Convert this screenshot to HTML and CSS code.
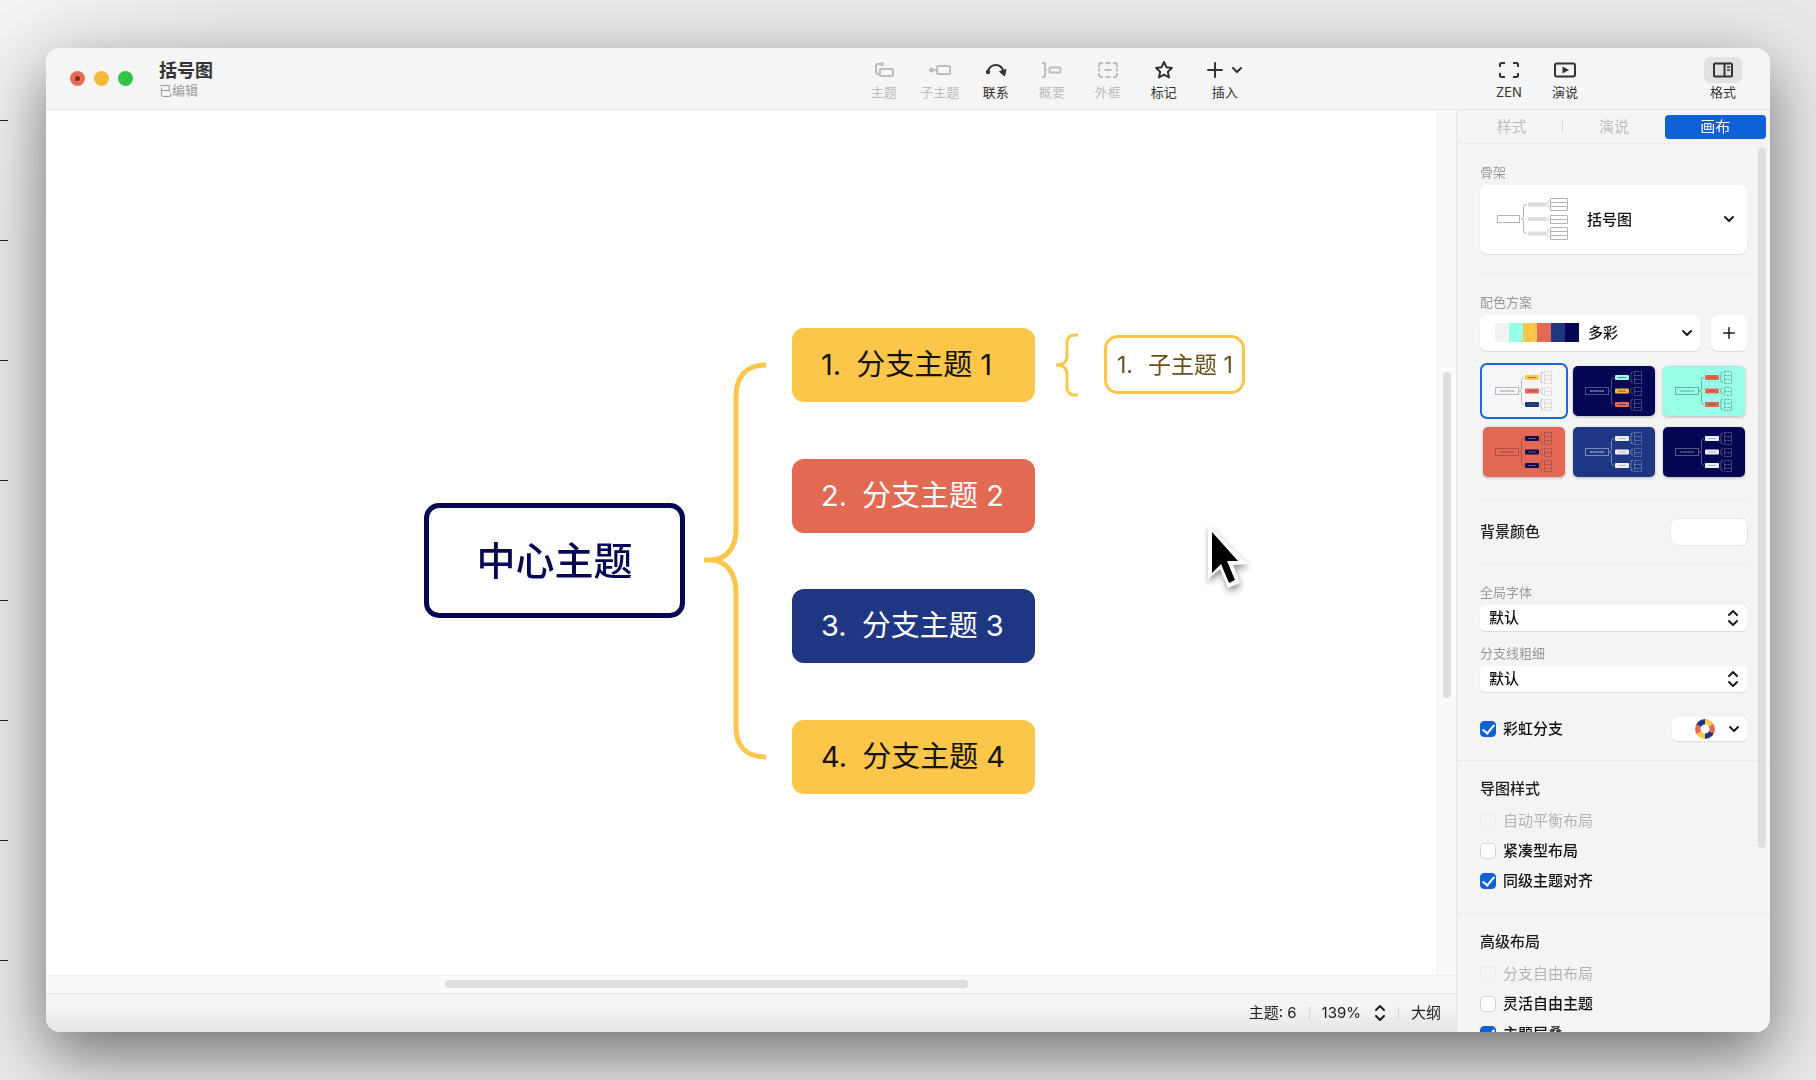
FILE: index.html
```html
<!DOCTYPE html>
<html lang="zh-CN">
<head>
<meta charset="utf-8">
<meta name="viewport" content="width=device-width, initial-scale=1">
<title>括号图</title>
<link rel="stylesheet" href="styles.css">
</head>
<body>
<svg class="defs" aria-hidden="true">
  <symbol id="chevron" viewBox="0 0 12 12"><path d="M2 4l4 4 4-4" fill="none" stroke="currentColor" stroke-width="2" stroke-linecap="round" stroke-linejoin="round"/></symbol>
  <symbol id="updown" viewBox="0 0 12 18"><path d="M2 6l4-4 4 4M2 12l4 4 4-4" fill="none" stroke="currentColor" stroke-width="2" stroke-linecap="round" stroke-linejoin="round"/></symbol>
  <symbol id="plus" viewBox="0 0 16 16"><path d="M8 1v14M1 8h14" fill="none" stroke="currentColor" stroke-width="2" stroke-linecap="round"/></symbol>
  <symbol id="minimap" viewBox="0 0 82 50">
    <rect x="12.500" y="21.500" width="23" height="7" class="m-line"/>
    <path d="M17 25h14" stroke="currentColor" stroke-width="1.200" stroke-dasharray="2 .4"/>
    <path d="M41 11.500q-2.500 0-2.500 3v8q0 2.500-2 2.500q2 0 2 2.500v8q0 3 2.500 3M60 6q-2 0-2 2v2q0 1-1 1.500q1 .5 1 1.500v2q0 2 2 2M60 22q-2 0-2 1.500t-1 1.500q1 0 1 1.500t2 1.500M60 33q-2 0-2 2v2q0 1-1 1.500q1 .5 1 1.500v2q0 2 2 2" class="m-line"/>
    <rect x="42" y="9" width="14" height="5" rx="1" class="m-a"/>
    <rect x="42" y="22.500" width="14" height="5" rx="1" class="m-b"/>
    <rect x="42" y="36" width="14" height="5" rx="1" class="m-c"/>
    <path d="M45 11.500h8M45 25h8M45 38.500h8" class="m-label"/>
    <path d="M61.500 5.500h7v12h-7zM61.500 9.500h7M61.500 13.500h7M61.500 21.500h7v8h-7zM61.500 25.500h7M61.500 33.500h7v11h-7zM61.500 37.500h7M61.500 41.500h7" class="m-leaf"/>
  </symbol>
</svg>

<main class="window">
  <header class="titlebar">
    <div class="brand">
      <div class="lights">
        <button class="light light-close" aria-label="关闭"></button>
        <button class="light light-min" aria-label="最小化"></button>
        <button class="light light-max" aria-label="缩放"></button>
      </div>
      <div class="doc">
        <h1 class="doc-name">括号图</h1>
        <p class="doc-state">已编辑</p>
      </div>
    </div>
    <nav class="tools" aria-label="工具">
      <button class="tool" disabled><span class="tool-icon"><svg width="20" height="18" viewBox="0 0 20 18"><g fill="none" stroke="currentColor" stroke-width="2"><rect x="6" y="8" width="13" height="7" rx="1.500"/><path d="M7 3H4Q2 3 2 5v6.500Q2 13 4 13h1.500"/></g><circle cx="8" cy="3" r="2" fill="currentColor"/></svg></span>主题</button>
      <button class="tool" disabled><span class="tool-icon"><svg width="24" height="18" viewBox="0 0 24 18"><rect x="9" y="5" width="13" height="8" rx="1.500" fill="none" stroke="currentColor" stroke-width="2"/><path d="M3 9h6" stroke="currentColor" stroke-width="2"/><circle cx="3.500" cy="9" r="2.500" fill="currentColor"/></svg></span>子主题</button>
      <button class="tool"><span class="tool-icon"><svg width="22" height="18" viewBox="0 0 22 18"><path d="M3 10Q5 4 11 4q5.500 0 7.500 6.500" fill="none" stroke="currentColor" stroke-width="2"/><circle cx="3" cy="11" r="2.200" fill="currentColor"/><path d="M14.500 10.500l6.500-2-1.500 6.500z" fill="currentColor" stroke="currentColor" stroke-linejoin="round"/></svg></span>联系</button>
      <button class="tool" disabled><span class="tool-icon"><svg width="22" height="18" viewBox="0 0 22 18"><g fill="none" stroke="currentColor" stroke-width="2"><path d="M1 2h1.500q1.500 0 1.500 1.500v11Q4 16 2.500 16H1M4 9h2"/><rect x="8.500" y="6.500" width="11" height="5" rx="1"/></g></svg></span>概要</button>
      <button class="tool" disabled><span class="tool-icon"><svg width="20" height="18" viewBox="0 0 20 18"><g fill="none" stroke="currentColor" stroke-width="2"><path d="M1 6V4.500Q1 2 3.500 2H5M7.500 2h5M15 2h1.500Q19 2 19 4.500V6M19 7.500v3M19 12v1.500q0 2.500-2.500 2.500H15M12.500 16h-5M5 16H3.500Q1 16 1 13.500V12M1 10.500v-3M6.500 9h7"/></g></svg></span>外框</button>
      <button class="tool"><span class="tool-icon"><svg width="20" height="20" viewBox="0 0 20 20"><path d="M10 2l2.400 5.200 5.600.7-4.100 3.900 1.100 5.700-5-2.800-5 2.800 1.100-5.700L2 7.900l5.600-.7z" fill="none" stroke="currentColor" stroke-width="2" stroke-linejoin="round"/></svg></span>标记</button>
      <button class="tool tool-wide"><span class="tool-icon"><svg width="16" height="16"><use href="#plus"/></svg><svg width="12" height="12"><use href="#chevron"/></svg></span>插入</button>
    </nav>
    <nav class="tools tools-view" aria-label="视图">
      <button class="tool"><span class="tool-icon"><svg width="20" height="18" viewBox="0 0 20 18"><path d="M1 6V3.500Q1 2 2.500 2H6M14 2h3.500Q19 2 19 3.500V6M19 12v2.500q0 1.500-1.500 1.500H14M6 16H2.500Q1 16 1 14.500V12" fill="none" stroke="currentColor" stroke-width="2"/></svg></span>ZEN</button>
      <button class="tool"><span class="tool-icon"><svg width="22" height="18" viewBox="0 0 22 18"><rect x="1" y="2.500" width="20" height="13" rx="2" fill="none" stroke="currentColor" stroke-width="2"/><path d="M8.500 5.500l6.500 3.500-6.500 3.500z" fill="currentColor"/></svg></span>演说</button>
    </nav>
    <button class="tool tool-active"><span class="tool-icon"><svg width="20" height="18" viewBox="0 0 20 18"><g fill="none" stroke="currentColor" stroke-width="2"><rect x="1" y="2.500" width="18" height="13" rx="1"/><path d="M11.500 2.500v13"/></g><path d="M14 6h3M14 9h3" stroke="currentColor" stroke-width="1.500"/></svg></span>格式</button>
  </header>

  <div class="workspace">
    <section class="editor">
      <div class="viewport">
        <div class="canvas">
          <svg class="links" aria-hidden="true">
            <path d="M720 255C700 255 690 267 690 287V420C690 438 680 450 664 450H658H664C680 450 690 463 690 482V617C690 636 700 647 720 647" class="link"/>
            <path d="M1032 225h-3q-8 0-8 8v13q0 9-11 9q11 0 11 9v13q0 8 8 8h3" class="link link-thin"/>
          </svg>
          <div class="node center">中心主题</div>
          <div class="node branch yellow b1"><span>1.</span><span>分支主题 1</span></div>
          <div class="node branch red b2"><span>2.</span><span>分支主题 2</span></div>
          <div class="node branch blue b3"><span>3.</span><span>分支主题 3</span></div>
          <div class="node branch yellow b4"><span>4.</span><span>分支主题 4</span></div>
          <div class="node leaf"><span>1.</span><span>子主题 1</span></div>
          <svg class="cursor" width="48" height="72" viewBox="0 0 48 72" aria-hidden="true"><path d="M7 3v55l12-10 8 19 12-5-7-18 14-1z" fill="#fff"/><path d="M11 11v41l9-9 8 19 6-3-8-19h11z" fill="#000"/></svg>
        </div>
        <div class="gutter-v"><span class="thumb-v"></span></div>
        <div class="gutter-h"><span class="thumb-h"></span></div>
      </div>
      <footer class="status">
        <span>主题: 6</span>
        <i class="bar"></i>
        <button class="zoom">139%<svg width="12" height="18"><use href="#updown"/></svg></button>
        <i class="bar"></i>
        <button class="outline">大纲</button>
      </footer>
    </section>

    <aside class="panel">
      <div class="tabs">
        <button class="tab">样式</button>
        <i class="bar"></i>
        <button class="tab">演说</button>
        <button class="tab tab-on">画布</button>
      </div>
      <div class="panel-body">
        <section class="group">
          <label class="caption" for="skeleton">骨架</label>
          <div class="field">
            <select id="skeleton" class="select select-card"><option>括号图</option></select>
            <svg class="skeleton-art" width="74" height="45" viewBox="0 0 74 45" aria-hidden="true"><g fill="none" stroke="#b4b4b4"><rect x=".5" y="18.500" width="22" height="7"/><path d="M30 7.500q-3.500 0-3.500 2v10q0 2.500-2 2.500q2 0 2 2.500v10q0 2 3.500 2"/><path d="M53.500 1.500h17v12h-17zM53.500 5.500h17M53.500 9.500h17M53.500 18.500h17v8h-17zM53.500 22.500h17M53.500 30.500h17v12h-17zM53.500 34.500h17M53.500 38.500h17"/><path d="M52 3q-2 4-2 4.500t2 4M52 20l-2 2 2 2M52 32q-2 4-2 4.500t2 4" stroke="#ccc"/></g><path d="M31 7.500h18M31 22h18M31 36.500h18" stroke="#dcdcdc" stroke-width="4"/></svg>
            <svg class="arrow arrow-far" width="12" height="12"><use href="#chevron"/></svg>
          </div>
        </section>

        <section class="group scheme">
          <label class="caption" for="palette">配色方案</label>
          <div class="scheme-row">
            <div class="field grow">
              <select id="palette" class="select select-palette"><option>多彩</option></select>
              <span class="swatches" aria-hidden="true"><i class="s1"></i><i class="s2"></i><i class="s3"></i><i class="s4"></i><i class="s5"></i><i class="s6"></i></span>
              <svg class="arrow" width="12" height="12"><use href="#chevron"/></svg>
            </div>
            <button class="add" aria-label="添加"><svg width="12" height="12"><use href="#plus"/></svg></button>
          </div>
          <div class="themes">
            <button class="theme t1 selected" aria-label="配色 1"><svg viewBox="0 0 82 50"><use href="#minimap"/></svg></button>
            <button class="theme t2" aria-label="配色 2"><svg viewBox="0 0 82 50"><use href="#minimap"/></svg></button>
            <button class="theme t3" aria-label="配色 3"><svg viewBox="0 0 82 50"><use href="#minimap"/></svg></button>
            <button class="theme t4" aria-label="配色 4"><svg viewBox="0 0 82 50"><use href="#minimap"/></svg></button>
            <button class="theme t5" aria-label="配色 5"><svg viewBox="0 0 82 50"><use href="#minimap"/></svg></button>
            <button class="theme t6" aria-label="配色 6"><svg viewBox="0 0 82 50"><use href="#minimap"/></svg></button>
          </div>
        </section>

        <section class="group backdrop">
          <span class="strong" id="bg-label">背景颜色</span>
          <button class="color-well" aria-labelledby="bg-label"></button>
        </section>

        <section class="group group-full lines">
          <label class="caption" for="font">全局字体</label>
          <div class="field">
            <select id="font" class="select"><option>默认</option></select>
            <svg class="arrow arrow-tall" width="12" height="18"><use href="#updown"/></svg>
          </div>
          <label class="caption caption-next" for="weight">分支线粗细</label>
          <div class="field">
            <select id="weight" class="select"><option>默认</option></select>
            <svg class="arrow arrow-tall" width="12" height="18"><use href="#updown"/></svg>
          </div>
          <div class="rainbow">
            <label class="check"><input type="checkbox" checked>彩虹分支</label>
            <button class="wheel-menu" aria-label="彩虹配色"><span class="wheel"></span><svg width="12" height="12"><use href="#chevron"/></svg></button>
          </div>
        </section>

        <section class="group group-full options">
          <h2 class="strong">导图样式</h2>
          <label class="check off"><input type="checkbox" disabled>自动平衡布局</label>
          <label class="check"><input type="checkbox">紧凑型布局</label>
          <label class="check"><input type="checkbox" checked>同级主题对齐</label>
        </section>

        <section class="group options">
          <h2 class="strong">高级布局</h2>
          <label class="check off"><input type="checkbox" disabled>分支自由布局</label>
          <label class="check"><input type="checkbox">灵活自由主题</label>
          <label class="check"><input type="checkbox" checked>主题层叠</label>
        </section>
        <span class="panel-thumb"></span>
      </div>
    </aside>
  </div>
</main>
</body>
</html>
```
FILE: styles.css
```css
* { box-sizing: border-box; margin: 0; }

body {
  height: 100vh;
  padding: 48px 46px;
  overflow: hidden;
  background:
    radial-gradient(circle at 0 0, #f2f4f4, transparent 240px),
    #e8e8e8;
  color: #1c1c1c;
  font-family: Inter, "Noto Sans CJK SC", sans-serif;
  font-size: 15px;
  line-height: 20px;
}

/* ruler marks along the left edge of the desktop */
body::before {
  content: "";
  position: absolute;
  z-index: 1;
  left: 0;
  top: 1px;
  width: 8px;
  height: 960px;
  background: linear-gradient(transparent 119px, #1c2320 119px) 0 0 / 8px 120px;
}

button, select, input { font: inherit; color: inherit; }
button { padding: 0; border: 0; background: none; }
svg { display: block; }
.defs { position: absolute; width: 0; height: 0; }

.window {
  display: flex;
  flex-direction: column;
  height: 100%;
  overflow: hidden;
  border-radius: 14px;
  background: #f4f4f4;
}
.window::before {
  content: "";
  position: fixed;
  z-index: -1;
  inset: 48px 46px;
  border-radius: 14px;
  box-shadow: 0 22px 64px rgba(0, 0, 0, .52);
}

/* title bar */
.titlebar {
  display: grid;
  grid-template-columns: 809fr 402px 223fr 112px 102fr 56px;
  align-items: center;
  flex: none;
  height: 62px;
  padding-right: 19px;
  border-bottom: 1px solid #e2e2e2;
  background: #f5f5f5;
}
.brand { display: flex; align-items: center; gap: 26px; padding-left: 24px; }
.lights { display: flex; gap: 9px; }
.light { width: 15px; height: 15px; border-radius: 50%; }
.light-close { background: radial-gradient(circle, #7c2f12 2px, #e76a58 3px); }
.light-min { background: #f2b93b; }
.light-max { background: #30c545; }
.doc-name { font-size: 18px; line-height: 22px; font-weight: 600; color: #333; }
.doc-state { font-size: 13px; line-height: 16px; color: #9c9c9c; }
.tools { display: flex; }
.tools-view { grid-column: 4; }
.tool {
  display: flex;
  flex-direction: column;
  align-items: center;
  width: 56px;
  font-size: 13px;
  line-height: 18px;
  color: #333;
}
.tool:disabled { color: #bdbdbd; }
.tool-wide { width: 66px; }
.tool-active { grid-column: 6; }
.tool-icon {
  display: flex;
  align-items: center;
  justify-content: center;
  gap: 8px;
  width: 38px;
  height: 26px;
  border-radius: 6px;
}
.tool-active .tool-icon { background: #e2e2e2; }

.workspace { display: flex; flex: 1; min-height: 0; }

/* editor */
.editor { display: flex; flex-direction: column; flex: 1; min-width: 0; }
.viewport {
  display: grid;
  grid-template-columns: 1fr 19px;
  grid-template-rows: 1fr 18px;
  flex: 1;
  min-height: 0;
  background: #fafaf9;
}
.canvas { position: relative; overflow: hidden; background: #fff; }
.gutter-v { padding: 262px 6px 0 5px; border-left: 1px solid #efefef; }
.thumb-v { display: block; width: 8px; height: 326px; border-radius: 4px; background: #dededd; }
.gutter-h { grid-column: 1 / 3; padding: 4px 0 0 399px; border-top: 1px solid #efefef; }
.thumb-h { display: block; width: 523px; height: 8px; border-radius: 4px; background: #dededd; }

/* mind map nodes on the free canvas */
.links { position: absolute; inset: 0; width: 100%; height: 100%; }
.link { fill: none; stroke: #fcc64a; stroke-width: 5; stroke-linejoin: bevel; }
.link-thin { stroke-width: 3; }
.node { position: absolute; display: flex; align-items: center; white-space: pre; }
.center {
  left: 378px;
  top: 393px;
  width: 261px;
  height: 115px;
  justify-content: center;
  border: 5px solid #050754;
  border-radius: 15px;
  color: #050754;
  font-size: 39px;
  font-weight: 500;
}
.branch {
  left: 746px;
  gap: 15px;
  width: 243px;
  height: 74px;
  padding-left: 29px;
  border-radius: 12px;
  font-size: 29px;
}
.leaf {
  left: 1058px;
  top: 225px;
  gap: 15px;
  width: 141px;
  height: 59px;
  padding-left: 10px;
  border: 3px solid #fcc64a;
  border-radius: 14px;
  color: #6b5018;
  font-size: 23px;
}
.b1 { top: 218px; }
.b2 { top: 349px; }
.b3 { top: 479px; }
.b4 { top: 610px; }
.yellow { background: #fcc64a; color: #15120a; }
.red { background: #e26a55; color: #fff; }
.blue { background: #1f3783; color: #fff; }
.cursor { position: absolute; left: 1155px; top: 411px; filter: drop-shadow(1px 4px 3px rgba(0, 0, 0, .4)); }

/* status bar */
.status {
  display: flex;
  align-items: center;
  justify-content: flex-end;
  gap: 12px;
  flex: none;
  height: 39px;
  padding-right: 15px;
  border-top: 1px solid #e4e4e4;
  background: linear-gradient(#f4f4f4 30%, #e6e6e6);
}
.bar { width: 1px; height: 13px; background: #d6d6d6; }
.zoom { display: flex; align-items: center; gap: 13px; }

/* format panel */
.panel {
  display: flex;
  flex-direction: column;
  flex: none;
  width: 314px;
  border-left: 1px solid #e6e6e6;
}
.tabs { display: flex; align-items: center; flex: none; height: 34px; padding: 0 4px; border-bottom: 1px solid #ececec; }
.tab { flex: 1; height: 24px; border-radius: 4px; color: #bdbdbd; }
.tab-on { background: #0f61d8; color: #fff; }
.panel-body { position: relative; flex: 1; min-height: 0; overflow: hidden; }
.panel-thumb { position: absolute; right: 4px; top: 4px; width: 8px; height: 700px; border-radius: 4px; background: #dededd; }

.group { display: flex; flex-direction: column; margin: 0 23px; padding: 19px 0; border-bottom: 1px solid #e9e9e9; }
.group-full { margin: 0; padding-left: 23px; padding-right: 23px; }
.caption { margin-bottom: 4px; font-size: 13px; line-height: 18px; color: #999; }
.strong { font-size: 15px; line-height: 20px; font-weight: 500; }
.field { position: relative; display: flex; }
.grow { flex: 1; }
.select {
  appearance: none;
  width: 100%;
  height: 26px;
  padding: 0 30px 0 9px;
  border: 0;
  border-radius: 5px;
  background: #fff;
  box-shadow: 0 1px 1px rgba(0, 0, 0, .1);
  color: #111;
  font-weight: 500;
}
.select-card { height: 69px; padding-left: 107px; border-radius: 8px; }
.select-palette { height: 36px; padding-left: 108px; border-radius: 7px; }
.skeleton-art { position: absolute; left: 17px; top: 12px; pointer-events: none; }
.arrow { position: absolute; right: 7px; top: 12px; pointer-events: none; }
.arrow-far { right: 12px; top: 28px; }
.arrow-tall { top: 4px; right: 8px; }

.scheme { padding-bottom: 22px; }
.scheme-row { display: flex; gap: 11px; margin-bottom: 15px; }
.swatches { position: absolute; left: 15px; top: 8px; display: flex; pointer-events: none; }
.swatches i { width: 14px; height: 19px; }
.s1 { background: #f2f2f2; }
.s2 { background: #98ffe6; }
.s3 { background: #fcc64a; }
.s4 { background: #e26a55; }
.s5 { background: #1f3783; }
.s6 { background: #050754; }
.add {
  display: grid;
  place-items: center;
  width: 36px;
  height: 36px;
  border-radius: 7px;
  background: #fff;
  box-shadow: 0 1px 1px rgba(0, 0, 0, .1);
}

.themes { display: grid; grid-template-columns: repeat(3, 82px); gap: 11px 8px; padding-left: 3px; }
.theme { height: 50px; border-radius: 5px; box-shadow: 0 1px 3px rgba(0, 0, 0, .25); }
.theme svg { width: 82px; height: 50px; }
.selected { outline: 2px solid #1c68d8; outline-offset: 1px; border-radius: 4px; box-shadow: none; }
.m-line { fill: none; stroke: var(--line); stroke-width: 1; }
.m-label { fill: none; stroke: var(--label); stroke-width: 1; stroke-opacity: .6; }
.m-leaf { fill: none; stroke: var(--leaf); stroke-width: 1; stroke-dasharray: 2 1; }
.m-a { fill: var(--a); }
.m-b { fill: var(--b); }
.m-c { fill: var(--c); }
.t1 { background: #f6f6f6; color: #8a8ca6; --line: #b4bac8; --label: #5c4a3a; --leaf: #dccfc8; --a: #fcc64a; --b: #e26a55; --c: #1f3783; }
.t2 { background: #050754; color: #c4c6dc; --line: #4c5088; --label: #3a2a3a; --leaf: #5c5c80; --a: #98ffe6; --b: #f0b440; --c: #e26a55; }
.t3 { background: #98ffe6; color: #4f9c98; --line: #5fb0a8; --label: #9c3a30; --leaf: #6aa8a8; --a: #e26a55; --b: #e26a55; --c: #e26a55; }
.t4 { background: #e26a55; color: #984038; --line: #b04e40; --label: #8c90b8; --leaf: #a04a48; --a: #120e50; --b: #120e50; --c: #120e50; }
.t5 { background: #1f3783; color: #c8d0e8; --line: #7a8abc; --label: #8088a8; --leaf: #6a7cb0; --a: #f0f0fa; --b: #f0f0fa; --c: #f0f0fa; }
.t6 { background: #050754; color: #8c8c98; --line: #56587c; --label: #8088a8; --leaf: #5c5c80; --a: #f0f0fa; --b: #f0f0fa; --c: #f0f0fa; }

.backdrop { flex-direction: row; align-items: center; justify-content: space-between; }
.color-well { width: 76px; height: 26px; border-radius: 6px; background: #fff; box-shadow: 0 0 0 1px #e6e6e6; }

.lines { padding-top: 18px; }
.caption-next { margin-top: 13px; }
.rainbow { display: flex; align-items: center; justify-content: space-between; margin-top: 25px; }
.wheel-menu {
  display: flex;
  align-items: center;
  justify-content: flex-end;
  gap: 13px;
  width: 75px;
  height: 24px;
  padding-right: 7px;
  border-radius: 5px;
  background: #fff;
  box-shadow: 0 1px 1px rgba(0, 0, 0, .1);
}
.wheel {
  width: 20px;
  height: 20px;
  border-radius: 50%;
  background:
    radial-gradient(circle, #fff 4px, transparent 5px),
    conic-gradient(#fcc64a 60deg, #e26a55 60deg 120deg, #1f3783 120deg 180deg, #fcc64a 180deg 240deg, #e26a55 240deg 300deg, #1f3783 300deg);
}

.options { gap: 10px; padding-top: 18px; padding-bottom: 22px; }
.options h2 { margin-bottom: 2px; }
.check { display: flex; align-items: center; gap: 7px; height: 20px; color: #111; font-weight: 500; }
.check input {
  appearance: none;
  display: grid;
  place-items: center;
  flex: none;
  width: 16px;
  height: 16px;
  border: 1px solid #d4d4d4;
  border-radius: 4px;
  background: #fff;
}
.check input:checked { border-color: #0f61d8; background: #0f61d8; }
.check input:checked::after {
  content: "";
  width: 5px;
  height: 10px;
  margin-bottom: 2px;
  border: solid #fff;
  border-width: 0 2px 2px 0;
  transform: rotate(40deg);
}
.off { color: #b4b4b4; font-weight: 400; }
.off input { border-color: #ebebeb; background: #f3f3f3; }
```
